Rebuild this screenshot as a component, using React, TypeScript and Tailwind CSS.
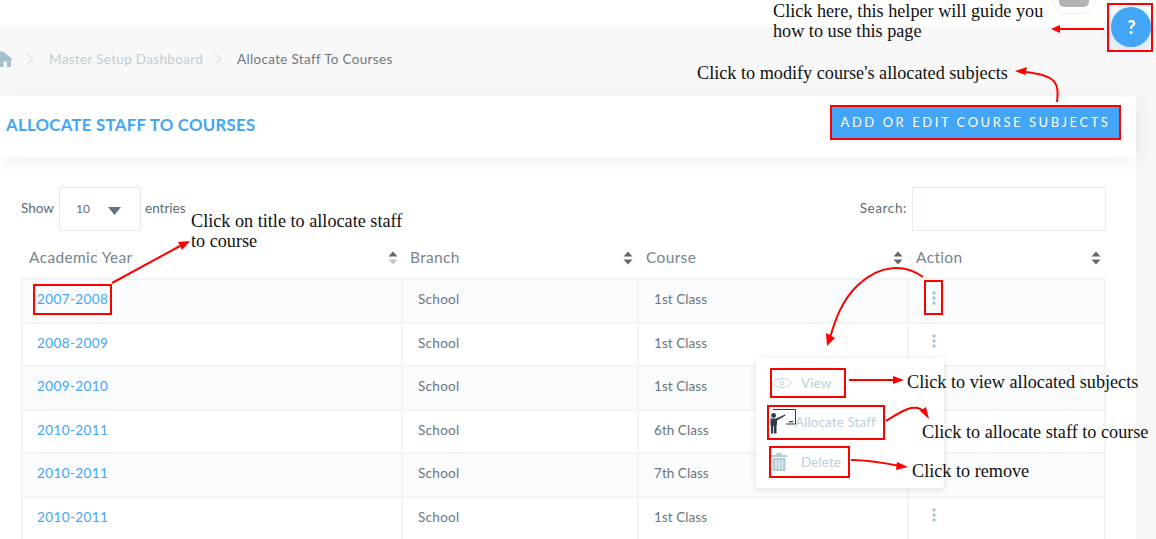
import React from "react";

const rows = [
  ["2007-2008", "School", "1st Class"],
  ["2008-2009", "School", "1st Class"],
  ["2009-2010", "School", "1st Class"],
  ["2010-2011", "School", "6th Class"],
  ["2010-2011", "School", "7th Class"],
  ["2010-2011", "School", "1st Class"],
];

function Sort({ dim }: { dim?: boolean }) {
  return (
    <svg width="10" height="14" viewBox="0 0 10 14" className="shrink-0">
      <path d="M5 0.5 L9.5 5.5 H0.5 Z" fill="#666" />
      <path d="M5 13.5 L9.5 8.5 H0.5 Z" fill={dim ? "#c4c4c4" : "#666"} />
    </svg>
  );
}

function Dots() {
  return (
    <svg width="4" height="14" viewBox="0 0 4 14">
      <circle cx="2" cy="2" r="1.7" fill="#a9c3ce" />
      <circle cx="2" cy="7" r="1.7" fill="#a9c3ce" />
      <circle cx="2" cy="12" r="1.7" fill="#a9c3ce" />
    </svg>
  );
}

function Chevron() {
  return (
    <svg width="8" height="12" viewBox="0 0 8 12" fill="none" stroke="#d0d7da" strokeWidth="1">
      <path d="M1 1 L7 6 L1 11" />
    </svg>
  );
}

function Note({ className, children }: { className: string; children: React.ReactNode }) {
  return (
    <div className={"absolute font-['Liberation_Serif',serif] text-[18.2px] leading-[20px] text-[#111] " + className}>
      {children}
    </div>
  );
}

function Box({ className }: { className: string }) {
  return <div className={"absolute border-2 border-[#ff0000] " + className} />;
}

export default function App() {
  return (
    <div className="relative w-[1156px] h-[539px] overflow-hidden bg-[#f6f6f6] font-['Lato',sans-serif]">
      {/* top bar */}
      <div className="h-[27px] bg-white relative">
        <div className="absolute left-[1052px] top-[-16px] w-[44px] h-[30px] rounded-full bg-white border border-[#eee] flex justify-center items-end pb-[6px]">
          <div className="w-[30px] h-[14px] rounded-[5px] bg-[#b3b3b3]" />
        </div>
      </div>

      {/* breadcrumb */}
      <div className="h-[69px] bg-[#f8f8f8] flex items-start pt-[23px] gap-[15px] text-[13.5px] leading-[18px] tracking-[0.32px]">
        <div className="flex items-center h-[18px]">
          <svg width="13" height="16" viewBox="0 0 13 16" className="-mt-[1px]">
            <path d="M3.2 0.5 L13 8.5 H11 V16 H7 V10.5 H3.5 V16 H0 V0.5 Z" fill="#a4c0c9" />
          </svg>
          <div className="w-[13px]" />
          <Chevron />
        </div>
        <span className="text-[#c0ced4]">Master Setup Dashboard</span>
        <div className="h-[18px] flex items-center -ml-[4px]"><Chevron /></div>
        <span className="text-[#6f7780]">Allocate Staff To Courses</span>
      </div>

      {/* main card */}
      <div className="w-[1136px] h-[443px] bg-white flex flex-col">
        <div className="h-[61px] shrink-0 bg-white shadow-[0_4px_20px_rgba(0,0,0,0.07)] flex items-center justify-between pl-[6px] pr-[17px] relative">
          <h1 className="text-[#42a5f5] text-[16.8px] font-bold tracking-[0.28px] -mt-[3px]">ALLOCATE STAFF TO COURSES</h1>
          <button className="w-[287px] h-[33px] bg-[#42a5f5] text-white text-[13px] tracking-[2.55px] font-normal -mt-[9px] pt-[1px]">
            ADD OR EDIT COURSE SUBJECTS
          </button>
        </div>

        <div className="pl-[21px] pr-[30px] pt-[30px] flex-1 flex flex-col">
          <div className="flex items-start justify-between h-[44px] text-[13.5px] text-[#5f6b76]">
            <div className="flex items-center h-[44px]">
              <span className="-mt-[1px] w-[38px]">Show</span>
              <div className="w-[82px] h-[44px] border border-[#e4ebf3] flex items-center justify-between pl-[16px] pr-[19px]">
                <span className="text-[#5f6b76] text-[12px] -mt-[1px]">10</span>
                <svg width="13" height="8" viewBox="0 0 13 8" className="mt-[3px]"><path d="M0 0 H13 L6.5 8 Z" fill="#677381" /></svg>
              </div>
              <span className="-mt-[1px] ml-[4px]">entries</span>
            </div>
            <div className="flex items-center gap-[5px] h-[44px]">
              <span className="-mt-[1px] tracking-[0.6px]">Search:</span>
              <div className="w-[194px] h-[44px] border border-[#e4ebf3]" />
            </div>
          </div>

          <div className="grid grid-cols-[381px_236px_270px_198px] h-[47px] pt-[6px] text-[15.5px] tracking-[0.35px] text-[#77838f]">
            <div className="flex items-center justify-between pl-[8px] pr-[4px]"><span>Academic Year</span><Sort dim /></div>
            <div className="flex items-center justify-between pl-[8px] pr-[5px]"><span>Branch</span><Sort /></div>
            <div className="flex items-center justify-between pl-[8px] pr-[5px]"><span>Course</span><Sort /></div>
            <div className="flex items-center justify-between pl-[8px] pr-[5px]"><span>Action</span><Sort /></div>
          </div>

          <div className="border-t-2 border-l-2 border-r-2 border-[#f1f3f5]">
            {rows.map((r, i) => (
              <div
                key={i}
                className={
                  "grid grid-cols-[380px_236px_270px_195px] h-[43.5px] border-b-2 border-[#f1f3f5] text-[13.5px] text-[#6a7680] " +
                  (i % 2 === 0 ? "bg-[#fafbfd]" : "bg-white")
                }
              >
                <div className="flex items-center pl-[14px] pb-[3px] tracking-[0.4px] text-[#42a5f5] border-r-2 border-[#f1f3f5]">{r[0]}</div>
                <div className="flex items-center pl-[15px] pb-[3px] tracking-[0.3px] border-r-2 border-[#f1f3f5]">{r[1]}</div>
                <div className="flex items-center pl-[15px] pb-[3px] tracking-[0.05px] border-r-2 border-[#f1f3f5]">{r[2]}</div>
                <div className="flex items-center pl-[23px] pb-[6px]"><Dots /></div>
              </div>
            ))}
          </div>
        </div>
      </div>

      {/* action dropdown */}
      <div className="absolute left-[756px] top-[358px] w-[188px] h-[130px] bg-white rounded-[4px] shadow-[0_1px_6px_rgba(0,0,0,0.12)] text-[13.5px] tracking-[0.1px] text-[#b9d0dc]">
        <div className="flex items-center h-[40px] mt-[4px] pl-[16px] pt-[2px]">
          <svg width="20" height="12" viewBox="0 0 20 12" fill="none" stroke="#c3d6df" strokeWidth="1">
            <path d="M0.5 6 C5 0 15 0 19.5 6 C15 12 5 12 0.5 6 Z" />
            <circle cx="10" cy="6" r="2" />
          </svg>
          <span className="ml-[9px]">View</span>
        </div>
        <div className="flex items-center h-[40px] pl-[14px]">
          <svg width="26" height="25" viewBox="0 0 26 25" className="shrink-0 -mt-[2px]">
            <path d="M3 0.5 H25.5 V15 H16" fill="none" stroke="#2f3b48" strokeWidth="1" />
            <rect x="19" y="12" width="4" height="1.3" fill="#2f3b48" />
            <circle cx="3.6" cy="6.5" r="2.4" fill="#2f3b48" />
            <path d="M0.5 9.5 H6 L15 5.5 L15.5 6.5 L7 11.5 V16 H6.5 V24.5 H4 V17 H3.2 V24.5 H1 V16 H0.5 Z" fill="#2f3b48" />
          </svg>
          <span className="-ml-[1px]">Allocate Staff</span>
        </div>
        <div className="flex items-center h-[40px] pl-[15px]">
          <svg width="16" height="18" viewBox="0 0 16 18">
            <path d="M5.5 0 H10.5 L11 2 H16 V4 H0 V2 H5 Z M1.5 5 H14.5 V18 H1.5 Z" fill="#b3ccd7" />
            <path d="M5 7 V16 M8 7 V16 M11 7 V16" stroke="#fff" strokeWidth="1" />
          </svg>
          <span className="ml-[14px]">Delete</span>
        </div>
      </div>

      {/* helper button */}
      <div className="absolute left-[1111px] top-[7px] w-[40px] h-[40px] rounded-full bg-[#42a5f5] shadow-[0_2px_14px_rgba(66,165,245,0.35)] flex items-center justify-center text-white font-black text-[18px] pl-[1px]">?</div>

      {/* annotation boxes */}
      <Box className="left-[1107px] top-[3px] w-[46px] h-[49px]" />
      <Box className="left-[830px] top-[105px] w-[291px] h-[35px]" />
      <Box className="left-[33px] top-[284px] w-[79px] h-[31px]" />
      <Box className="left-[924px] top-[280px] w-[19px] h-[35px]" />
      <Box className="left-[770px] top-[368px] w-[76px] h-[30px]" />
      <Box className="left-[767px] top-[405px] w-[118px] h-[35px]" />
      <Box className="left-[769px] top-[446px] w-[81px] h-[32px]" />

      {/* annotation arrows */}
      <svg className="absolute left-0 top-0 pointer-events-none" width="1156" height="539" viewBox="0 0 1156 539" fill="none" stroke="#ff0000" strokeWidth="2">
        <path d="M1104 29 H1058" />
        <path d="M1051 29 L1060 25 V33 Z" fill="#ff0000" stroke="none" />
        <path d="M1057 102 C1059 84 1058 75 1024 72" />
        <path d="M1015 71 L1027 67 L1025 75 Z" fill="#ff0000" stroke="none" />
        <path d="M112 283 L180 246" />
        <path d="M190 241 L178 242 L182 250 Z" fill="#ff0000" stroke="none" />
        <path d="M923 277 C905 264 880 264 858 285 C842 300 835 320 830 338" />
        <path d="M827 346 L826 333 L835 338 Z" fill="#ff0000" stroke="none" />
        <path d="M849 380 H895" />
        <path d="M904 380 L893 376 V384 Z" fill="#ff0000" stroke="none" />
        <path d="M886 421 C900 412 915 402 924 412" />
        <path d="M929 419 L920 411 L926 407 Z" fill="#ff0000" stroke="none" />
        <path d="M851 460 C870 460 885 463 900 466" />
        <path d="M908 467 L897 462 L896 470 Z" fill="#ff0000" stroke="none" />
      </svg>

      {/* annotation notes */}
      <Note className="left-[773px] top-[1px] w-[290px]">Click here, this helper will guide you how to use this page</Note>
      <Note className="left-[697px] top-[63px] whitespace-nowrap">Click to modify course's allocated subjects</Note>
      <Note className="left-[191px] top-[211px] w-[225px]">Click on title to allocate staff to course</Note>
      <Note className="left-[907px] top-[372px] whitespace-nowrap">Click to view allocated subjects</Note>
      <Note className="left-[922px] top-[422px] whitespace-nowrap">Click to allocate staff to course</Note>
      <Note className="left-[912px] top-[461px] whitespace-nowrap">Click to remove</Note>
    </div>
  );
}
